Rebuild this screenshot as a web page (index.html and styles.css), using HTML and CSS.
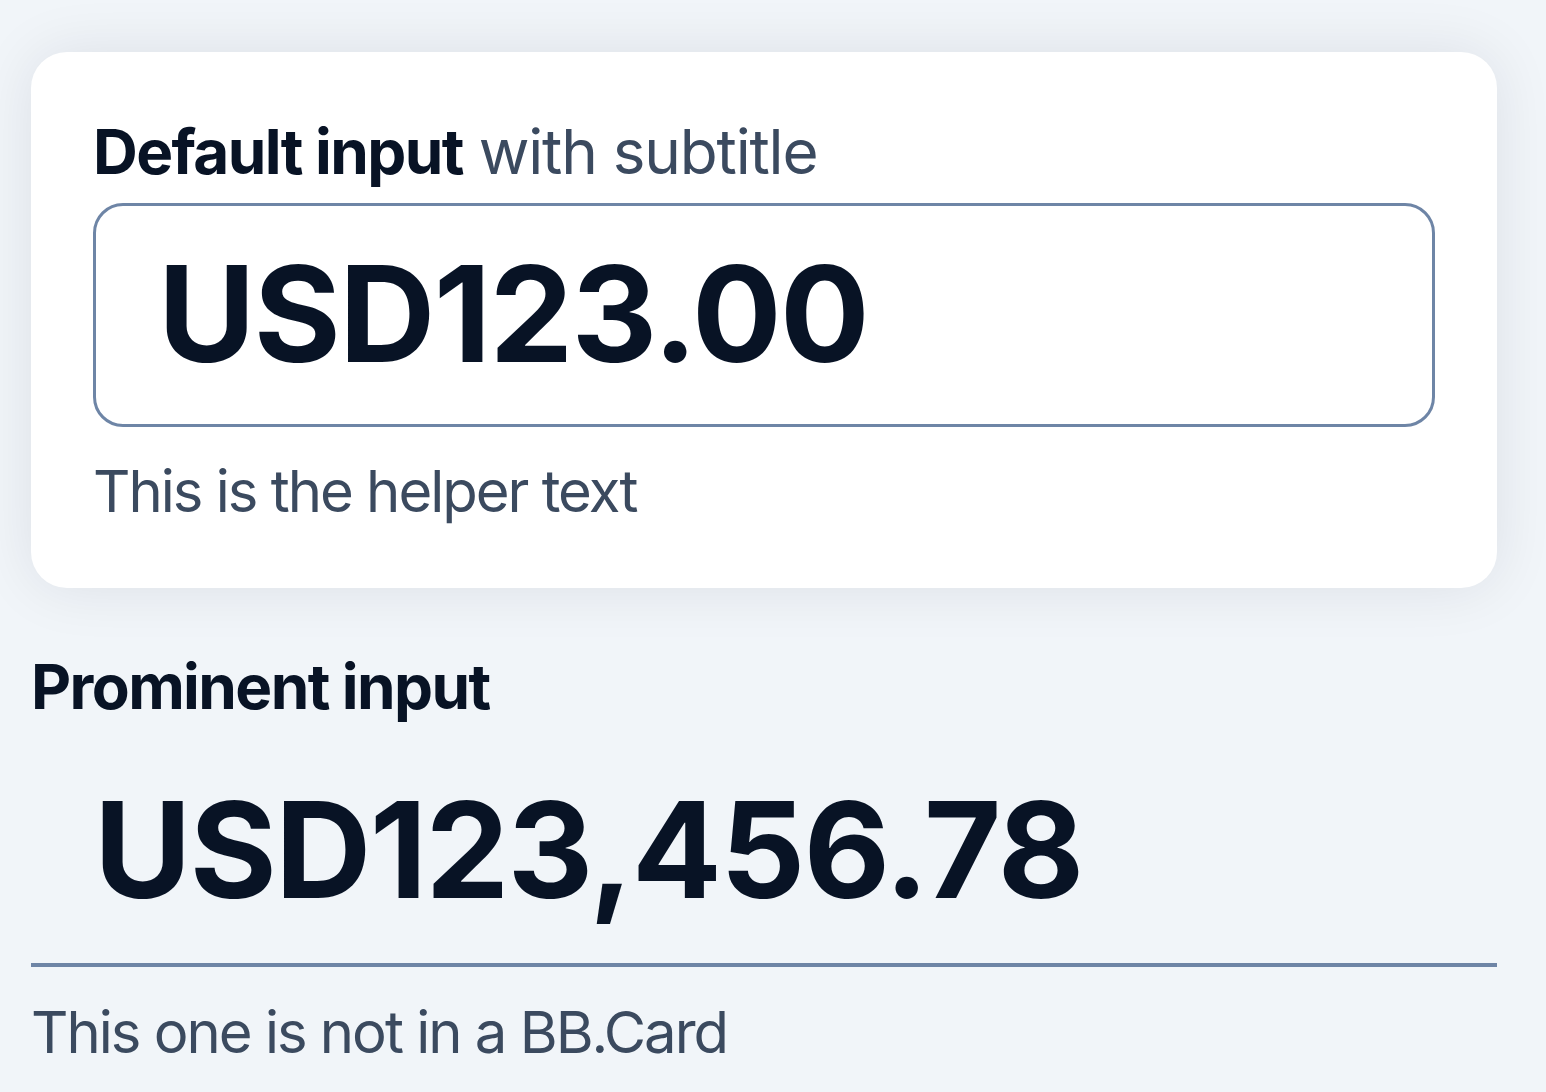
FILE: index.html
```html
<!DOCTYPE html>
<html lang="en">

<head>
    <meta charset="UTF-8" />
    <meta name="viewport" content="width=device-width, initial-scale=1.0" />
    <title>Inputs</title>
    <link rel="stylesheet" href="styles.css">
</head>

<body>
    <div class="page">
        <!-- Default input inside a card -->
        <div class="card">
            <div class="field-title"><strong>Default input</strong> <span class="subtitle">with subtitle</span></div>
            <div class="input-box">
                <input type="text" class="amount" value="USD123.00" />
            </div>
            <p class="helper">This is the helper text</p>
        </div>

        <!-- Prominent input -->
        <div class="prominent">
            <div class="field-title"><strong>Prominent input</strong></div>
            <input type="text" class="amount amount-prominent" value="USD123,456.78" />
            <div class="underline"></div>
            <p class="helper">This one is not in a BB.Card</p>
        </div>
    </div>
</body>

</html>
```

FILE: styles.css
```css
* {
    margin: 0;
    padding: 0;
    box-sizing: border-box;
}

body {
    font-family: Inter, "Noto Sans", sans-serif;
    background-color: #f1f5f9;
    color: #081325;
}

.page {
    padding: 52px 49px 0 31px;
}

.card {
    background-color: #fff;
    border-radius: 36px;
    padding: 63px 62px 62px 62px;
    box-shadow: 0 0 60px rgba(15, 23, 42, 0.09);
}

.field-title {
    font-size: 62px;
    line-height: 74px;
    letter-spacing: -1.6px;
}

.field-title strong {
    font-weight: 700;
}

.subtitle {
    font-weight: 400;
    color: #3b4a5f;
    letter-spacing: -1.2px;
}

.input-box {
    margin: 14px 0 0 0;
    border: 3px solid #6e85a6;
    border-radius: 30px;
    padding: 28px 60px 30px 62px;
}

.amount {
    display: block;
    width: 100%;
    border: none;
    outline: none;
    background: transparent;
    font-family: inherit;
    font-size: 133px;
    line-height: 160px;
    height: 160px;
    font-weight: 700;
    color: #081325;
    letter-spacing: -1.6px;
}

.helper {
    margin-top: 29px;
    font-size: 58px;
    line-height: 70px;
    color: #3b4a5f;
    letter-spacing: -2px;
}

.prominent {
    margin-top: 62px;
}

.amount-prominent {
    margin-top: 46px;
    padding-left: 63px;
}

.underline {
    margin-top: 33px;
    height: 4px;
    background-color: #6e85a6;
}

.prominent .helper {
    margin-top: 30px;
}
```
